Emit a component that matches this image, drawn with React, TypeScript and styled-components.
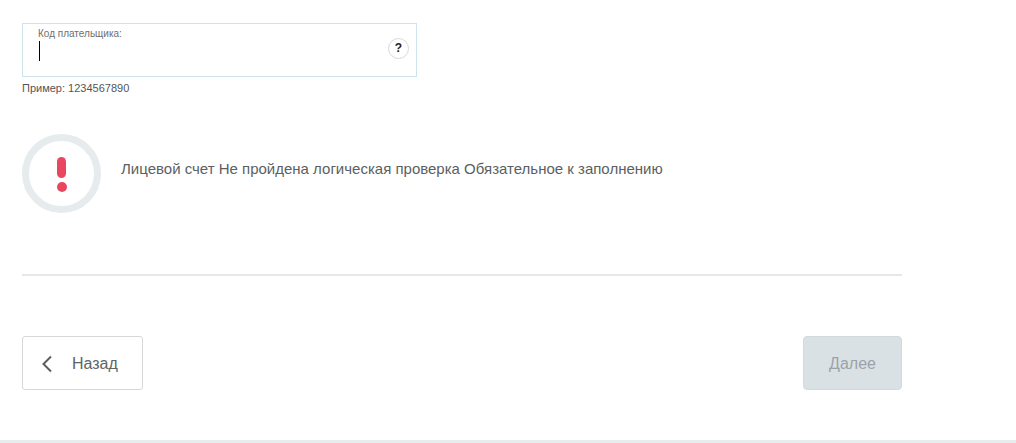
import * as React from 'react';
import styled, { createGlobalStyle } from 'styled-components';

const GlobalStyle = createGlobalStyle`
  html, body {
    margin: 0;
    padding: 0;
    background: #fff;
    font-family: "Liberation Sans", Arial, sans-serif;
  }
`;

const Page = styled.div`
  width: 1016px;
  height: 443px;
  overflow: hidden;
  display: flex;
  flex-direction: column;
`;

const Content = styled.main`
  flex: 1;
  width: 880px;
  margin-left: 22px;
  padding-top: 23px;
  box-sizing: border-box;
`;

const Field = styled.div`
  width: 395px;
  height: 54px;
  box-sizing: border-box;
  border: 1px solid #cfe3ec;
  padding: 5px 7px 0 15px;
  display: flex;
  justify-content: space-between;
`;

const FieldBody = styled.div`
  display: flex;
  flex-direction: column;
`;

const FieldLabel = styled.label`
  font-size: 10px;
  line-height: 10px;
  color: #6f6f6f;
`;

const Caret = styled.span`
  width: 1px;
  height: 20px;
  margin: 2px 0 0 1px;
  background: #000;
`;

const HelpButton = styled.button`
  width: 21px;
  height: 21px;
  margin-top: 9px;
  padding: 0;
  border: 1px solid #d8d8d8;
  border-radius: 50%;
  background: #fff;
  color: #222;
  font: bold 12px/19px "Liberation Sans", Arial, sans-serif;
  text-align: center;
`;

const Hint = styled.div`
  margin-top: 5px;
  font-size: 11px;
  line-height: 12px;
  color: #555;
`;

const Alert = styled.div`
  margin-top: 40px;
  display: flex;
  align-items: center;
  gap: 20px;
`;

const AlertRing = styled.div`
  width: 79px;
  height: 79px;
  box-sizing: border-box;
  border: 7px solid #e6ebed;
  border-radius: 50%;
  padding-top: 2px;
  display: flex;
  flex-direction: column;
  align-items: center;
  justify-content: center;
  gap: 4px;
`;

const AlertBar = styled.span`
  width: 9px;
  height: 21px;
  border-radius: 5px;
  background: #e8475f;
`;

const AlertDot = styled.span`
  width: 10px;
  height: 10px;
  border-radius: 50%;
  background: #e8475f;
`;

const AlertText = styled.p`
  margin: 0 0 9px;
  font-size: 15px;
  line-height: 18px;
  color: #5c5f5f;
`;

const Divider = styled.hr`
  margin: 61px 0 0;
  border: 0;
  border-top: 2px solid #e6e8e8;
`;

const Actions = styled.div`
  margin-top: 60px;
  display: flex;
  justify-content: space-between;
`;

const BackButton = styled.button`
  width: 121px;
  height: 54px;
  padding: 1px 0 0 17px;
  box-sizing: border-box;
  display: flex;
  align-items: center;
  gap: 18px;
  border: 1px solid #d5d7d8;
  border-radius: 3px;
  background: #fff;
  color: #616464;
  font: 16px "Liberation Sans", Arial, sans-serif;
`;

const NextButton = styled.button`
  width: 99px;
  height: 54px;
  padding: 2px 0 0;
  border: 1px solid #d2dade;
  border-radius: 4px;
  background: #dae1e4;
  color: #9aa3a8;
  font: 16px "Liberation Sans", Arial, sans-serif;
`;

const FooterLine = styled.div`
  height: 3px;
  background: #e7eded;
`;

const ChevronLeft = () => (
  <svg width="14" height="18" viewBox="0 0 14 18" fill="none">
    <path d="M11 1.5 L3.5 9 L11 16.5" stroke="#5c5f5f" strokeWidth="2" />
  </svg>
);

export default function App() {
  return (
    <Page>
      <GlobalStyle />
      <Content>
        <Field>
          <FieldBody>
            <FieldLabel>Код плательщика:</FieldLabel>
            <Caret />
          </FieldBody>
          <HelpButton type="button">?</HelpButton>
        </Field>
        <Hint>Пример: 1234567890</Hint>

        <Alert>
          <AlertRing>
            <AlertBar />
            <AlertDot />
          </AlertRing>
          <AlertText>Лицевой счет Не пройдена логическая проверка Обязательное к заполнению</AlertText>
        </Alert>

        <Divider />

        <Actions>
          <BackButton type="button">
            <ChevronLeft />
            Назад
          </BackButton>
          <NextButton type="button" disabled>
            Далее
          </NextButton>
        </Actions>
      </Content>
      <FooterLine />
    </Page>
  );
}
